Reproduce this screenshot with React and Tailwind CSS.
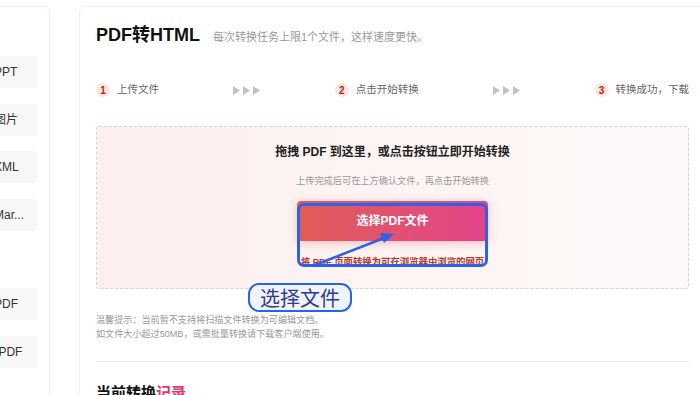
import React from 'react';

const font = { fontFamily: '"Liberation Sans", "Noto Sans CJK SC", sans-serif' };

const sideTop = ['PDF转PPT', 'PDF转图片', 'PDF转XML', 'PDF转Mar...'];
const sideBottom = ['图片转PDF', 'Word转PDF'];

const SideItem = ({ label }) => (
  <div className="h-[32px] rounded-[4px] bg-[#f7f7f7] pl-[18px] flex items-center text-[12px] text-[#333] whitespace-nowrap">
    {label}
  </div>
);

const StepNo = ({ n }) => (
  <span className="w-[14px] h-[14px] rounded-full bg-[#fbe6e2] text-[#c9171d] text-[10px] font-bold flex items-center justify-center">
    {n}
  </span>
);

const Step = ({ n, text }) => (
  <div className="flex items-center gap-[7px]">
    <StepNo n={n} />
    <span className="text-[10.5px] text-[#666] whitespace-nowrap">{text}</span>
  </div>
);

const Arrows = () => (
  <svg width="28" height="9" viewBox="0 0 28 9">
    <polygon points="0,0 7,4.5 0,9" fill="#c2c2c2" />
    <polygon points="10,0 17,4.5 10,9" fill="#c2c2c2" />
    <polygon points="20,0 27,4.5 20,9" fill="#c2c2c2" />
  </svg>
);

export default function App() {
  return (
    <div className="relative w-[700px] h-[395px] overflow-hidden bg-white flex pt-[6px]" style={font}>
      {/* sidebar, mostly off screen */}
      <div className="ml-[-110px] w-[160px] h-[420px] shrink-0 border border-[#efefef] rounded-[6px] pt-[49px] pl-[49px] pr-[12px] flex flex-col">
        <div className="flex flex-col gap-[15.5px]">
          {sideTop.map((s) => (
            <SideItem key={s} label={s} />
          ))}
        </div>
        <div className="flex flex-col gap-[16px] mt-[57px]">
          {sideBottom.map((s) => (
            <SideItem key={s} label={s} />
          ))}
        </div>
      </div>

      {/* main card */}
      <div className="ml-[29px] w-[627px] h-[420px] shrink-0 border border-[#efefef] rounded-[6px] px-[16px] pt-[16px]">
        <div className="flex items-baseline h-[24px]">
          <h1 className="text-[18px] font-bold text-[#111] leading-[24px]">PDF转HTML</h1>
          <span className="ml-[13px] text-[11px] text-[#999]">每次转换任务上限1个文件，这样速度更快。</span>
        </div>

        <div className="mt-[36px] h-[14px] flex items-center justify-between">
          <Step n="1" text="上传文件" />
          <Arrows />
          <Step n="2" text="点击开始转换" />
          <Arrows />
          <Step n="3" text="转换成功，下载" />
        </div>

        <div className="mt-[29px] h-[163px] border border-dashed border-[#d6d6d6] rounded-[3px] bg-gradient-to-r from-[#fcefee] to-[#fdf9f8] flex flex-col items-center pt-[17px]">
          <div className="text-[12px] font-bold text-[#222] leading-[16px]">拖拽 PDF 到这里，或点击按钮立即开始转换</div>
          <div className="mt-[15px] text-[9.2px] text-[#999] leading-[12px]">上传完成后可在上方确认文件，再点击开始转换</div>
          <button className="mt-[14px] w-[191px] h-[40px] rounded-[4px] bg-gradient-to-r from-[#e25c55] to-[#e3428a] text-white text-[12px] font-bold shadow-[0_2px_10px_rgba(232,80,100,0.35)]">
            选择PDF文件
          </button>
          <div className="mt-[15px] h-[8px] overflow-hidden">
            <div className="text-[9.4px] leading-[11px] font-bold text-[#b8372c] whitespace-nowrap">将 PDF 页面转换为可在浏览器中浏览的网页</div>
          </div>
        </div>

        <div className="mt-[24px] text-[9.1px] leading-[14px] text-[#999]">
          <p>温馨提示：当前暂不支持将扫描文件转换为可编辑文档。</p>
          <p>如文件大小超过50MB，或需批量转换请下载客户端使用。</p>
        </div>

        <div className="mt-[20px] border-t border-[#eee]" />

        <h2 className="mt-[21px] text-[15px] font-bold leading-[20px] text-[#111]">
          当前转换<span className="text-[#e0336c]">记录</span>
        </h2>
      </div>

      {/* annotation overlay */}
      <div className="absolute left-[297px] top-[203px] w-[191px] h-[64px] border-[3px] border-[#2a62e8] rounded-[7px] pointer-events-none" />
      <svg className="absolute left-0 top-0 pointer-events-none" width="700" height="395">
        <line x1="315" y1="265" x2="384" y2="238" stroke="#2a62e8" strokeWidth="2.5" strokeLinecap="round" />
        <polygon points="394,234 380,233 384,243" fill="#2a62e8" />
      </svg>
      <div className="absolute left-[248px] top-[283px] w-[104px] h-[29px] rounded-[11px] border-2 border-[#2a62e8] bg-[#eef3fd] flex items-center justify-center text-[20px] leading-[24px] text-[#2d3c8e]" style={{ fontFamily: '"Noto Sans CJK SC", sans-serif' }}>
        选择文件
      </div>
    </div>
  );
}
